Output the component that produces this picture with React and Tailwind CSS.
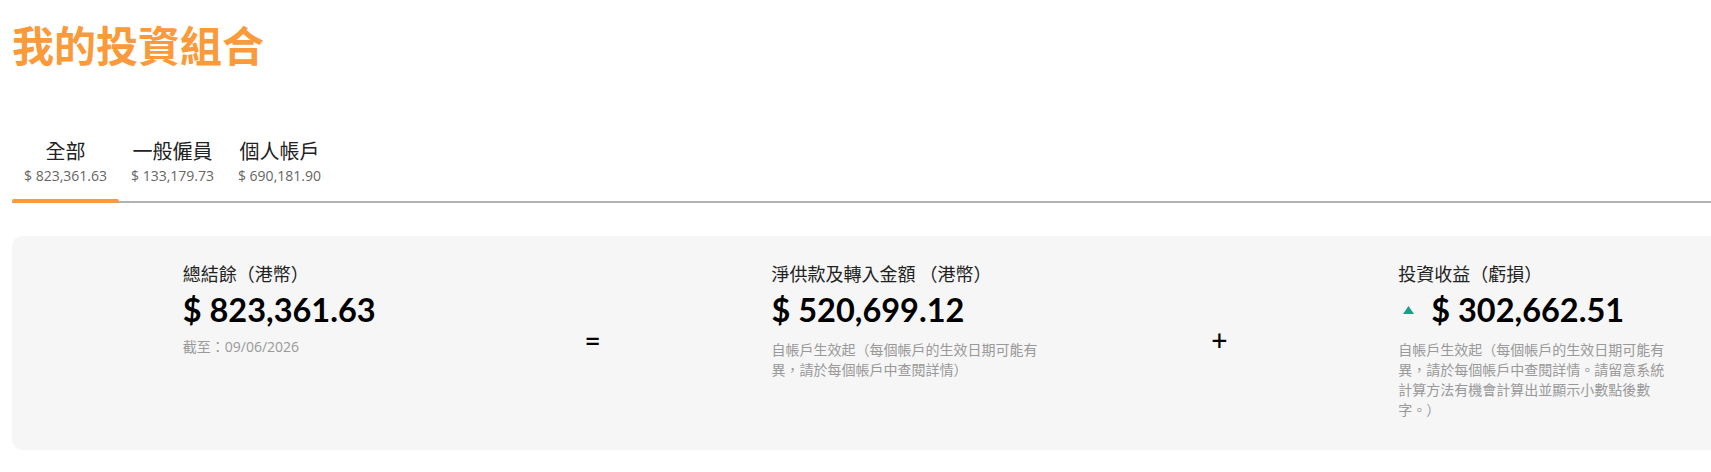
import React from "react";

const CJK = "'Noto Sans CJK TC', 'Noto Sans CJK SC', sans-serif";
const LATIN = "'Open Sans', 'Noto Sans CJK TC', sans-serif";
const FIGURE = "Lato, 'Noto Sans CJK TC', sans-serif";

const tabs = [
  { label: "全部", amount: "$ 823,361.63", active: true },
  { label: "一般僱員", amount: "$ 133,179.73" },
  { label: "個人帳戶", amount: "$ 690,181.90" },
];

function Tab({ label, amount, active }) {
  return (
    <button className="-mb-[2px] flex flex-col">
      <span className="flex flex-col items-center px-3">
        <span
          className="text-[20px] leading-[30px] font-normal text-[#222]"
          style={{ fontFamily: CJK }}
        >
          {label}
        </span>
        <span
          className="text-[14px] leading-5 text-[#666]"
          style={{ fontFamily: LATIN }}
        >
          {amount}
        </span>
      </span>
      <span
        className={
          "mt-[13px] block h-1 w-full rounded-full " +
          (active ? "bg-[#fa9a3a]" : "bg-transparent")
        }
      />
    </button>
  );
}

function Label({ children }) {
  return (
    <div
      className="text-[18px] leading-[27px] text-[#222]"
      style={{ fontFamily: CJK }}
    >
      {children}
    </div>
  );
}

function Amount({ children }) {
  return (
    <div
      className="text-[32.5px] leading-[45px] font-bold text-black"
      style={{ fontFamily: FIGURE }}
    >
      {children}
    </div>
  );
}

function Note({ children }) {
  return (
    <p
      className="mt-2 text-[14px] leading-5 text-[#999]"
      style={{ fontFamily: LATIN }}
    >
      {children}
    </p>
  );
}

function Operator({ children }) {
  return (
    <div
      className="self-center text-[28px] leading-none font-medium text-black"
      style={{ fontFamily: FIGURE }}
    >
      {children}
    </div>
  );
}

export default function App() {
  return (
    <div className="w-full overflow-hidden bg-white">
      <div className="w-[1851px] pl-3 pt-3">
        <h1
          className="text-[42px] leading-[1.5] font-bold text-[#fa9a3a]"
          style={{ fontFamily: CJK }}
        >
          我的投資組合
        </h1>

        <div className="mt-[61px] flex border-b-2 border-[#b3b3b3]">
          {tabs.map((t) => (
            <Tab key={t.label} {...t} />
          ))}
        </div>

        <div className="mt-[33px] flex w-[1827px] justify-evenly rounded-[10px] bg-[#f6f6f6] pt-6 pb-[30px]">
          <div className="w-[231px] self-start">
            <Label>總結餘（港幣）</Label>
            <Amount>$ 823,361.63</Amount>
            <p
              className="mt-[5px] text-[14px] leading-5 text-[#999]"
              style={{ fontFamily: LATIN }}
            >
              截至：09/06/2026
            </p>
          </div>

          <Operator>=</Operator>

          <div className="w-[269px] self-start">
            <Label>淨供款及轉入金額 （港幣）</Label>
            <Amount>$ 520,699.12</Amount>
            <Note>自帳戶生效起（每個帳戶的生效日期可能有異，請於每個帳戶中查閱詳情）</Note>
          </div>

          <Operator>+</Operator>

          <div className="w-[270px] self-start">
            <Label>投資收益（虧損）</Label>
            <div className="flex items-center">
              <svg
                className="ml-[5px] mr-[17px] shrink-0"
                width="11"
                height="8"
                viewBox="0 0 11 8"
              >
                <path d="M5.5 0 L11 8 L0 8 Z" fill="#1a9e8a" />
              </svg>
              <Amount>$ 302,662.51</Amount>
            </div>
            <Note>
              自帳戶生效起（每個帳戶的生效日期可能有異，請於每個帳戶中查閱詳情。請留意系統計算方法有機會計算出並顯示小數點後數字。）
            </Note>
          </div>
        </div>
      </div>
    </div>
  );
}
